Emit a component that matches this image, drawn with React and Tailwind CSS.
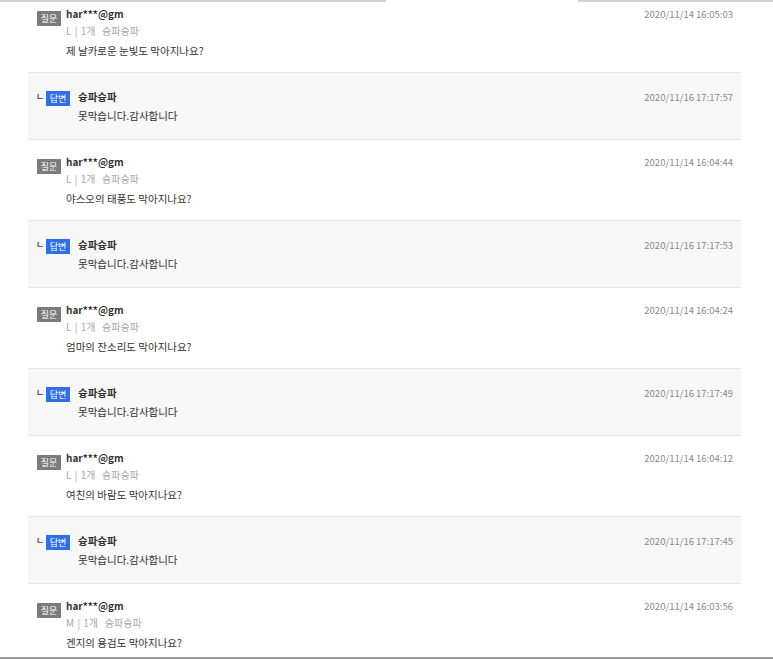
import React from 'react';

const items = [
  { q: '제 날카로운 눈빛도 막아지나요?', qTime: '2020/11/14 16:05:03', size: 'L', aTime: '2020/11/16 17:17:57' },
  { q: '야스오의 태풍도 막아지나요?', qTime: '2020/11/14 16:04:44', size: 'L', aTime: '2020/11/16 17:17:53' },
  { q: '엄마의 잔소리도 막아지나요?', qTime: '2020/11/14 16:04:24', size: 'L', aTime: '2020/11/16 17:17:49' },
  { q: '여친의 바람도 막아지나요?', qTime: '2020/11/14 16:04:12', size: 'L', aTime: '2020/11/16 17:17:45' },
  { q: '겐지의 용검도 막아지나요?', qTime: '2020/11/14 16:03:56', size: 'M', aTime: null },
];

function Question({ item }) {
  return (
    <div className="flex h-[80px] bg-white pl-[9px] pr-[8px] pt-[13px]">
      <div className="mt-[6px] flex h-[15px] w-[24px] items-center justify-center bg-[#7b7b7b] text-[9px] leading-none text-white">
        질문
      </div>
      <div className="ml-[5px] flex flex-1 flex-col">
        <div className="text-[10px] font-bold leading-[18px] text-[#333]">har***@gm</div>
        <div className="text-[10px] leading-[16px] text-[#a8a8a8]">
          {item.size} <span className="mx-[1px]">|</span> 1개&nbsp;&nbsp; 슝파슝파
        </div>
        <div className="mt-[4px] text-[10.5px] leading-[16px] text-[#333]">{item.q}</div>
      </div>
      <div className="text-[9.5px] leading-[18px] text-[#8a8a8a]">{item.qTime}</div>
    </div>
  );
}

function Answer({ time }) {
  return (
    <div className="flex h-[68px] border-y border-[#e6e6e6] bg-[#f7f7f7] pl-[8px] pr-[8px] pt-[15px]">
      <div className="mt-[3px] flex h-[14px] w-[10px] items-start text-[9px] font-bold leading-[12px] text-[#56606e]">ㄴ</div>
      <div className="mt-[3px] flex h-[15px] w-[24px] items-center justify-center bg-[#2f6fe2] text-[9px] leading-none text-white">
        답변
      </div>
      <div className="ml-[8px] flex flex-1 flex-col">
        <div className="text-[10.5px] font-bold leading-[18px] text-[#333]">슝파슝파</div>
        <div className="mt-[2px] text-[10.5px] leading-[16px] text-[#333]">못막습니다.감사합니다</div>
      </div>
      <div className="text-[9.5px] leading-[18px] text-[#8a8a8a]">{time}</div>
    </div>
  );
}

export default function App() {
  return (
    <div
      className="relative h-[659px] w-[773px] overflow-hidden bg-white"
      style={{ fontFamily: '"Noto Sans CJK KR", "Noto Sans", sans-serif' }}
    >
      <div className="-mt-[8px] px-[28px] pr-[32px]">
        {items.map((item, i) => (
          <div key={i}>
            <Question item={item} />
            {item.aTime && <Answer time={item.aTime} />}
          </div>
        ))}
      </div>
      <div className="absolute left-0 top-0 h-[2px] w-[386px] bg-[#d4d4d4]" />
      <div className="absolute right-0 top-0 h-[2px] w-[195px] bg-[#d4d4d4]" />
      <div className="absolute bottom-0 left-0 h-[2px] w-full bg-[#9a9a9a]" />
    </div>
  );
}
